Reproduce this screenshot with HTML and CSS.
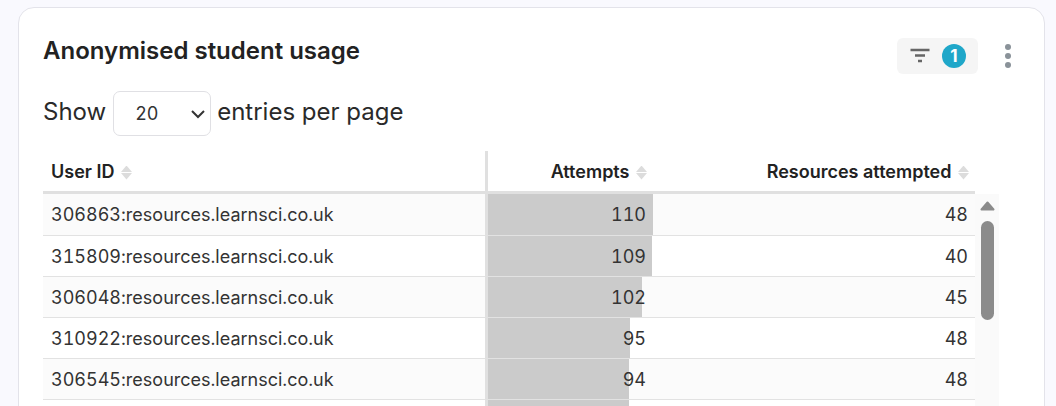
FILE: index.html
```html
<!DOCTYPE html>
<html lang="en">
<head>
  <meta charset="UTF-8">
  <title>Anonymised student usage</title>
  <link rel="stylesheet" href="styles.css">
</head>
<body>
  <div class="card">
    <div class="card-head">
      <h2>Anonymised student usage</h2>
      <div class="actions">
        <div class="filter-btn">
          <svg width="20" height="16" viewBox="0 0 20 16"><path d="M0.500 2h19M5 7.500h10M8 13h4" stroke="#666" stroke-width="2.500" fill="none"/></svg>
          <span class="badge">1</span>
        </div>
        <svg class="more" width="8" height="26" viewBox="0 0 8 26"><circle cx="4" cy="4" r="3" /><circle cx="4" cy="13" r="3" /><circle cx="4" cy="22" r="3" /></svg>
      </div>
    </div>

    <div class="page-size">
      <span>Show</span>
      <select><option>20</option></select>
      <span>entries per page</span>
    </div>

    <div class="table-wrap">
      <table>
        <thead>
          <tr>
            <th class="col-user">User ID <span class="sort"></span></th>
            <th class="col-attempts num">Attempts <span class="sort"></span></th>
            <th class="num">Resources attempted <span class="sort"></span></th>
          </tr>
        </thead>
        <tbody>
          <tr><td>306863:resources.learnsci.co.uk</td><td class="bar num" style="background-size:165px 100%">110</td><td class="num">48</td></tr>
          <tr><td>315809:resources.learnsci.co.uk</td><td class="bar num" style="background-size:164px 100%">109</td><td class="num">40</td></tr>
          <tr><td>306048:resources.learnsci.co.uk</td><td class="bar num" style="background-size:154px 100%">102</td><td class="num">45</td></tr>
          <tr><td>310922:resources.learnsci.co.uk</td><td class="bar num" style="background-size:142px 100%">95</td><td class="num">48</td></tr>
          <tr><td>306545:resources.learnsci.co.uk</td><td class="bar num" style="background-size:141px 100%">94</td><td class="num">48</td></tr>
          <tr><td></td><td class="bar num" style="background-size:141px 100%"></td><td class="num"></td></tr>
        </tbody>
      </table>
      <div class="scrollbar">
        <svg width="15" height="10" viewBox="0 0 15 10"><path d="M7.500 1.500L13.500 8.500H1.500Z" fill="#8b8b8b" stroke="#8b8b8b" stroke-width="2" stroke-linejoin="round"/></svg>
        <span class="scroll-thumb"></span>
      </div>
    </div>
  </div>
</body>
</html>
```

FILE: styles.css
```css
html, body {
  height: 100%;
  overflow: hidden;
}
body {
  margin: 0;
  padding: 7px 11px 0 18px;
  background: #f9f9fe;
  font-family: Inter, "Liberation Sans", sans-serif;
  color: #2a2a2a;
}
.card {
  box-sizing: border-box;
  height: 500px;
  padding: 24px 24px 0 24px;
  background: #fff;
  border: 1px solid #e3e3ea;
  border-radius: 16px;
}
.card-head {
  display: flex;
  justify-content: space-between;
  align-items: flex-start;
}
h2 {
  margin: 0;
  font-size: 24px;
  line-height: 38px;
  font-weight: 600;
  color: #222;
}
.actions {
  display: flex;
  align-items: center;
  gap: 26px;
  margin: 6px 8px 0 0;
}
.filter-btn {
  display: flex;
  align-items: center;
  gap: 12px;
  box-sizing: border-box;
  width: 81px;
  height: 36px;
  padding: 0 12px 0 13px;
  background: #f5f5f5;
  border-radius: 6px;
}
.badge {
  width: 24px;
  height: 24px;
  border-radius: 50%;
  background: #1fa7c9;
  color: #fff;
  font-size: 17px;
  font-weight: 700;
  line-height: 24px;
  text-align: center;
}
.more {
  fill: #8a9299;
}
.page-size {
  display: flex;
  align-items: center;
  gap: 7px;
  margin-top: 17px;
  font-size: 24px;
}
.page-size span {
  margin-bottom: 4px;
}
select {
  appearance: none;
  width: 98px;
  height: 45px;
  margin-right: -1px;
  padding: 0 0 0 21px;
  background: #fff url("data:image/svg+xml,%3Csvg xmlns='http://www.w3.org/2000/svg' width='14' height='10'%3E%3Cpath d='M1 2l6 6 6-6' stroke='%23333' stroke-width='2' fill='none'/%3E%3C/svg%3E") no-repeat right 5px center;
  border: 1px solid #e0e0e4;
  border-radius: 7px;
  font-family: inherit;
  font-size: 18px;
  font-variant-numeric: tabular-nums;
  color: #333;
}
.table-wrap {
  display: flex;
  align-items: flex-start;
  margin-top: 15px;
}
table {
  width: 932px;
  border-collapse: separate;
  border-spacing: 0;
  table-layout: fixed;
}
th {
  height: 40px;
  padding: 0 8px;
  border-bottom: 3px solid #e0e0e0;
  font-size: 18px;
  font-weight: 600;
  text-align: left;
  color: #222;
}
th.num {
  padding-right: 6px;
}
td {
  box-sizing: border-box;
  height: 41px;
  padding: 0 8px;
  border-bottom: 1px solid #e2e2e2;
  font-size: 18px;
  font-variant-numeric: tabular-nums;
  color: #333;
  background-clip: padding-box;
}
td.num {
  padding-right: 7px;
}
tbody tr:first-child td {
  height: 42px;
}
tbody tr:nth-child(odd) td {
  background-color: #fbfbfb;
}
.col-user {
  width: 426px;
}
.col-attempts {
  width: 151px;
  border-left: 3px solid #e0e0e0;
}
.num {
  text-align: right;
}
td.bar {
  border-left: 3px solid #e0e0e0;
  background-image: linear-gradient(#cbcbcb, #cbcbcb);
  background-repeat: no-repeat;
}
.sort {
  display: inline-flex;
  flex-direction: column;
  gap: 1px;
  margin-left: 2px;
  vertical-align: middle;
}
.sort::before,
.sort::after {
  content: "";
  width: 11px;
  height: 6.500px;
  background: #dcdcdc;
}
.sort::before {
  clip-path: polygon(50% 0, 100% 100%, 0 100%);
}
.sort::after {
  clip-path: polygon(0 0, 100% 0, 50% 100%);
}
.scrollbar {
  display: flex;
  flex-direction: column;
  align-items: center;
  gap: 10px;
  box-sizing: border-box;
  width: 24px;
  height: 400px;
  margin-top: 43px;
  padding-top: 7px;
  background: #fafafa;
}
.scroll-thumb {
  width: 13px;
  height: 99px;
  background: #8b8b8b;
  border-radius: 7px;
}
```
